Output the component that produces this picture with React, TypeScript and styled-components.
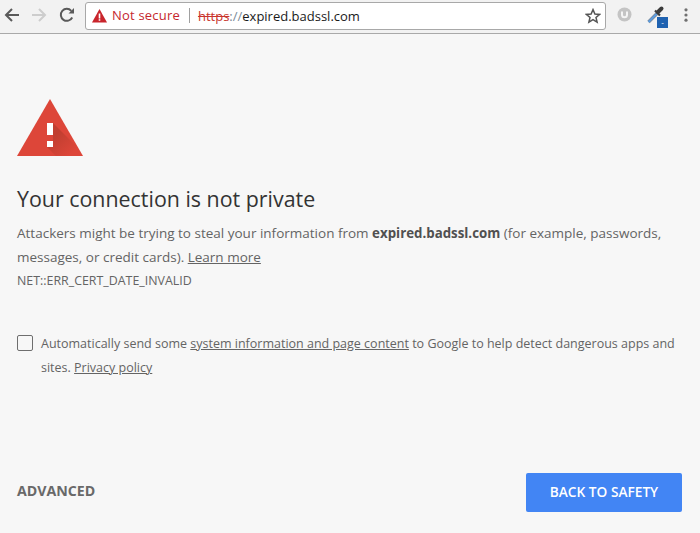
import React from "react";
import styled, { createGlobalStyle } from "styled-components";

const Global = createGlobalStyle`
  html, body { margin: 0; padding: 0; height: 100%; overflow: hidden; background: #f7f7f7; }
  #root { height: 100%; }
  * { box-sizing: border-box; }
`;

const Page = styled.div`
  width: 700px;
  height: 533px;
  display: flex;
  flex-direction: column;
  font-family: "Open Sans", "Noto Sans", sans-serif;
  color: #646464;
`;

const Toolbar = styled.header`
  height: 34px;
  flex: none;
  display: flex;
  align-items: center;
  background: #f2f2f2;
  border-bottom: 1px solid #a9a9a9;
  padding: 0 0 4px 0;
`;

const NavButton = styled.button`
  width: 24px;
  height: 24px;
  flex: none;
  padding: 0;
  margin-left: ${(p) => p.$gap ?? 0}px;
  border: 0;
  background: none;
  display: flex;
  align-items: center;
  justify-content: center;
`;

const Omnibox = styled.div`
  width: 521px;
  height: 28px;
  margin-left: 6px;
  margin-top: 2px;
  flex: none;
  display: flex;
  align-items: center;
  background: #fff;
  border: 1px solid #a8a8a8;
  border-radius: 3px;
  padding: 0 4px 0 6px;
  font-size: 13px;
`;

const NotSecure = styled.span`
  color: #c5272e;
  margin-left: 5px;
  padding-right: 9px;
  border-right: 1px solid #a0a0a0;
  line-height: 15px;
  letter-spacing: 0.2px;
`;

const Url = styled.span`
  margin-left: 8px;
  color: #1a1a1a;
  flex: 1;
`;

const Scheme = styled.span`
  color: #c9342c;
  text-decoration: line-through;
`;

const SchemeSep = styled.span`
  color: #7a8a99;
`;

const ExtensionSlot = styled.div`
  position: relative;
  display: flex;
  align-items: center;
  justify-content: center;
  margin-left: ${(p) => p.$gap}px;
  width: ${(p) => p.$w}px;
  height: 24px;
  flex: none;
`;

const Badge = styled.span`
  position: absolute;
  right: 0;
  bottom: -1px;
  width: 11px;
  height: 11px;
  background: #1f62b0;
  color: #fff;
  font-size: 8px;
  line-height: 10px;
  text-align: center;
`;

const MenuDots = styled.svg`
  flex: none;
  margin-left: 15px;
`;

const Main = styled.main`
  flex: 1;
  display: flex;
  flex-direction: column;
  padding: 65px 18px 21px 17px;
  background: #f7f7f7;
`;

const AlertIcon = styled.svg`
  display: block;
  width: 66px;
  height: 57px;
  flex: none;
`;

const Title = styled.h1`
  margin: 28px 0 0;
  font-size: 21.4px;
  line-height: 30px;
  font-weight: 400;
  color: #333;
`;

const Paragraph = styled.p`
  margin: 7px 0 0;
  font-size: 13.5px;
  line-height: 24px;
`;

const Strong = styled.strong`
  font-weight: 700;
  font-size: 13.3px;
  color: #505050;
`;

const TextLink = styled.a`
  color: #646464;
  text-decoration: underline;
`;

const ErrorCode = styled.div`
  font-size: 12.4px;
  line-height: 24px;
`;

const CheckRow = styled.label`
  display: flex;
  align-items: flex-start;
  margin-top: 39px;
  font-size: 12.5px;
  line-height: 24px;
`;

const CheckBox = styled.span`
  width: 16px;
  height: 16px;
  flex: none;
  margin: 3px 8px 0 0;
  background: #f7f7f7;
  border: 1px solid #6e6e6e;
  border-radius: 2px;
`;

const Footer = styled.footer`
  margin-top: auto;
  display: flex;
  align-items: center;
  justify-content: space-between;
`;

const Advanced = styled.button`
  border: 0;
  padding: 0 0 4px;
  background: none;
  font: 700 14.2px "Open Sans", sans-serif;
  color: #696969;
`;

const Safety = styled.button`
  width: 156px;
  height: 39px;
  border: 0;
  border-radius: 2px;
  padding: 0 0 2px;
  background: #4285f4;
  color: #fff;
  font: 600 13.7px "Open Sans", sans-serif;
`;

export default function App() {
  return (
    <Page>
      <Global />
      <Toolbar>
        <NavButton $gap={0}>
          <svg width="16" height="16" viewBox="0 0 16 16" fill="none" stroke="#5a5a5a" strokeWidth="2">
            <path d="M15 8H2M8 2 2 8l6 6" />
          </svg>
        </NavButton>
        <NavButton $gap={3}>
          <svg width="16" height="16" viewBox="0 0 16 16" fill="none" stroke="#cdcdcd" strokeWidth="2">
            <path d="M1 8h13M8 2l6 6-6 6" />
          </svg>
        </NavButton>
        <NavButton $gap={4}>
          <svg width="16" height="16" viewBox="0 0 16 16" fill="none">
            <path d="M13.2 10.5A6 6 0 1 1 12.3 3.8" stroke="#5a5a5a" strokeWidth="2" />
            <path d="M9.5 6.5H15V1z" fill="#5a5a5a" />
          </svg>
        </NavButton>
        <Omnibox>
          <svg width="15" height="14" viewBox="0 0 15 14">
            <path d="M7.5 0 15 13.5H0z" fill="#c9252c" />
            <path d="M6.7 4.5h1.6v5H6.7zM6.7 10.2h1.6v1.6H6.7z" fill="#fff" />
          </svg>
          <NotSecure>Not secure</NotSecure>
          <Url>
            <Scheme>https</Scheme>
            <SchemeSep>://</SchemeSep>
            expired.badssl.com
          </Url>
          <svg width="16" height="16" viewBox="0 0 16 16" fill="none" stroke="#555" strokeWidth="1.5">
            <path d="M8 1.6 9.9 6l4.7.4-3.6 3.1 1.1 4.6L8 11.7l-4.1 2.4L5 9.5 1.4 6.4 6.1 6z" />
          </svg>
        </Omnibox>
        <ExtensionSlot $gap={10} $w={16}>
          <svg width="15" height="15" viewBox="0 0 15 15">
            <circle cx="7.5" cy="7.5" r="7" fill="#c4c4c4" />
            <path d="M5 4.5v3.2a2.5 2.5 0 0 0 5 0V4.500" fill="none" stroke="#f5f5f5" strokeWidth="2" />
          </svg>
        </ExtensionSlot>
        <ExtensionSlot $gap={13} $w={23}>
          <svg width="20" height="20" viewBox="0 0 20 20" fill="none">
            <path d="M1.500 17 10 8.500" stroke="#7d8b99" strokeWidth="3.4" />
            <path d="M1.500 17 10 8.500" stroke="#5b9be0" strokeWidth="1.800" />
            <path d="M8 5.500l5 5" stroke="#3c3c3c" strokeWidth="2.200" />
            <path d="M11 7l3.500-3.500" stroke="#3c3c3c" strokeWidth="4" strokeLinecap="round" />
          </svg>
          <Badge>-</Badge>
        </ExtensionSlot>
        <MenuDots width="6" height="14" viewBox="0 0 6 14">
          <circle cx="3" cy="1.800" r="1.600" fill="#707070" />
          <circle cx="3" cy="7" r="1.600" fill="#707070" />
          <circle cx="3" cy="12.200" r="1.600" fill="#707070" />
        </MenuDots>
      </Toolbar>
      <Main>
        <AlertIcon viewBox="0 0 66 57">
          <defs>
            <linearGradient id="alertShade" x1="0.3" y1="0.3" x2="0.8" y2="0.8">
              <stop offset="0" stopColor="#b23a2c" stopOpacity="0.65" />
              <stop offset="1" stopColor="#b23a2c" stopOpacity="0" />
            </linearGradient>
          </defs>
          <path d="M33 0 66 57H0z" fill="#dd4639" />
          <path d="M36 24 62 50 66 57H39L30 48h6z" fill="url(#alertShade)" />
          <path d="M30 24h6v12h-6zM30 42h6v6h-6z" fill="#fff" />
        </AlertIcon>
        <Title>Your connection is not private</Title>
        <Paragraph>
          Attackers might be trying to steal your information from <Strong>expired.badssl.com</Strong> (for example,
          passwords, messages, or credit cards). <TextLink>Learn more</TextLink>
        </Paragraph>
        <ErrorCode>NET::ERR_CERT_DATE_INVALID</ErrorCode>
        <CheckRow>
          <CheckBox />
          <span>
            Automatically send some <TextLink>system information and page content</TextLink> to Google to help detect
            dangerous apps and sites. <TextLink>Privacy policy</TextLink>
          </span>
        </CheckRow>
        <Footer>
          <Advanced>ADVANCED</Advanced>
          <Safety>BACK TO SAFETY</Safety>
        </Footer>
      </Main>
    </Page>
  );
}
